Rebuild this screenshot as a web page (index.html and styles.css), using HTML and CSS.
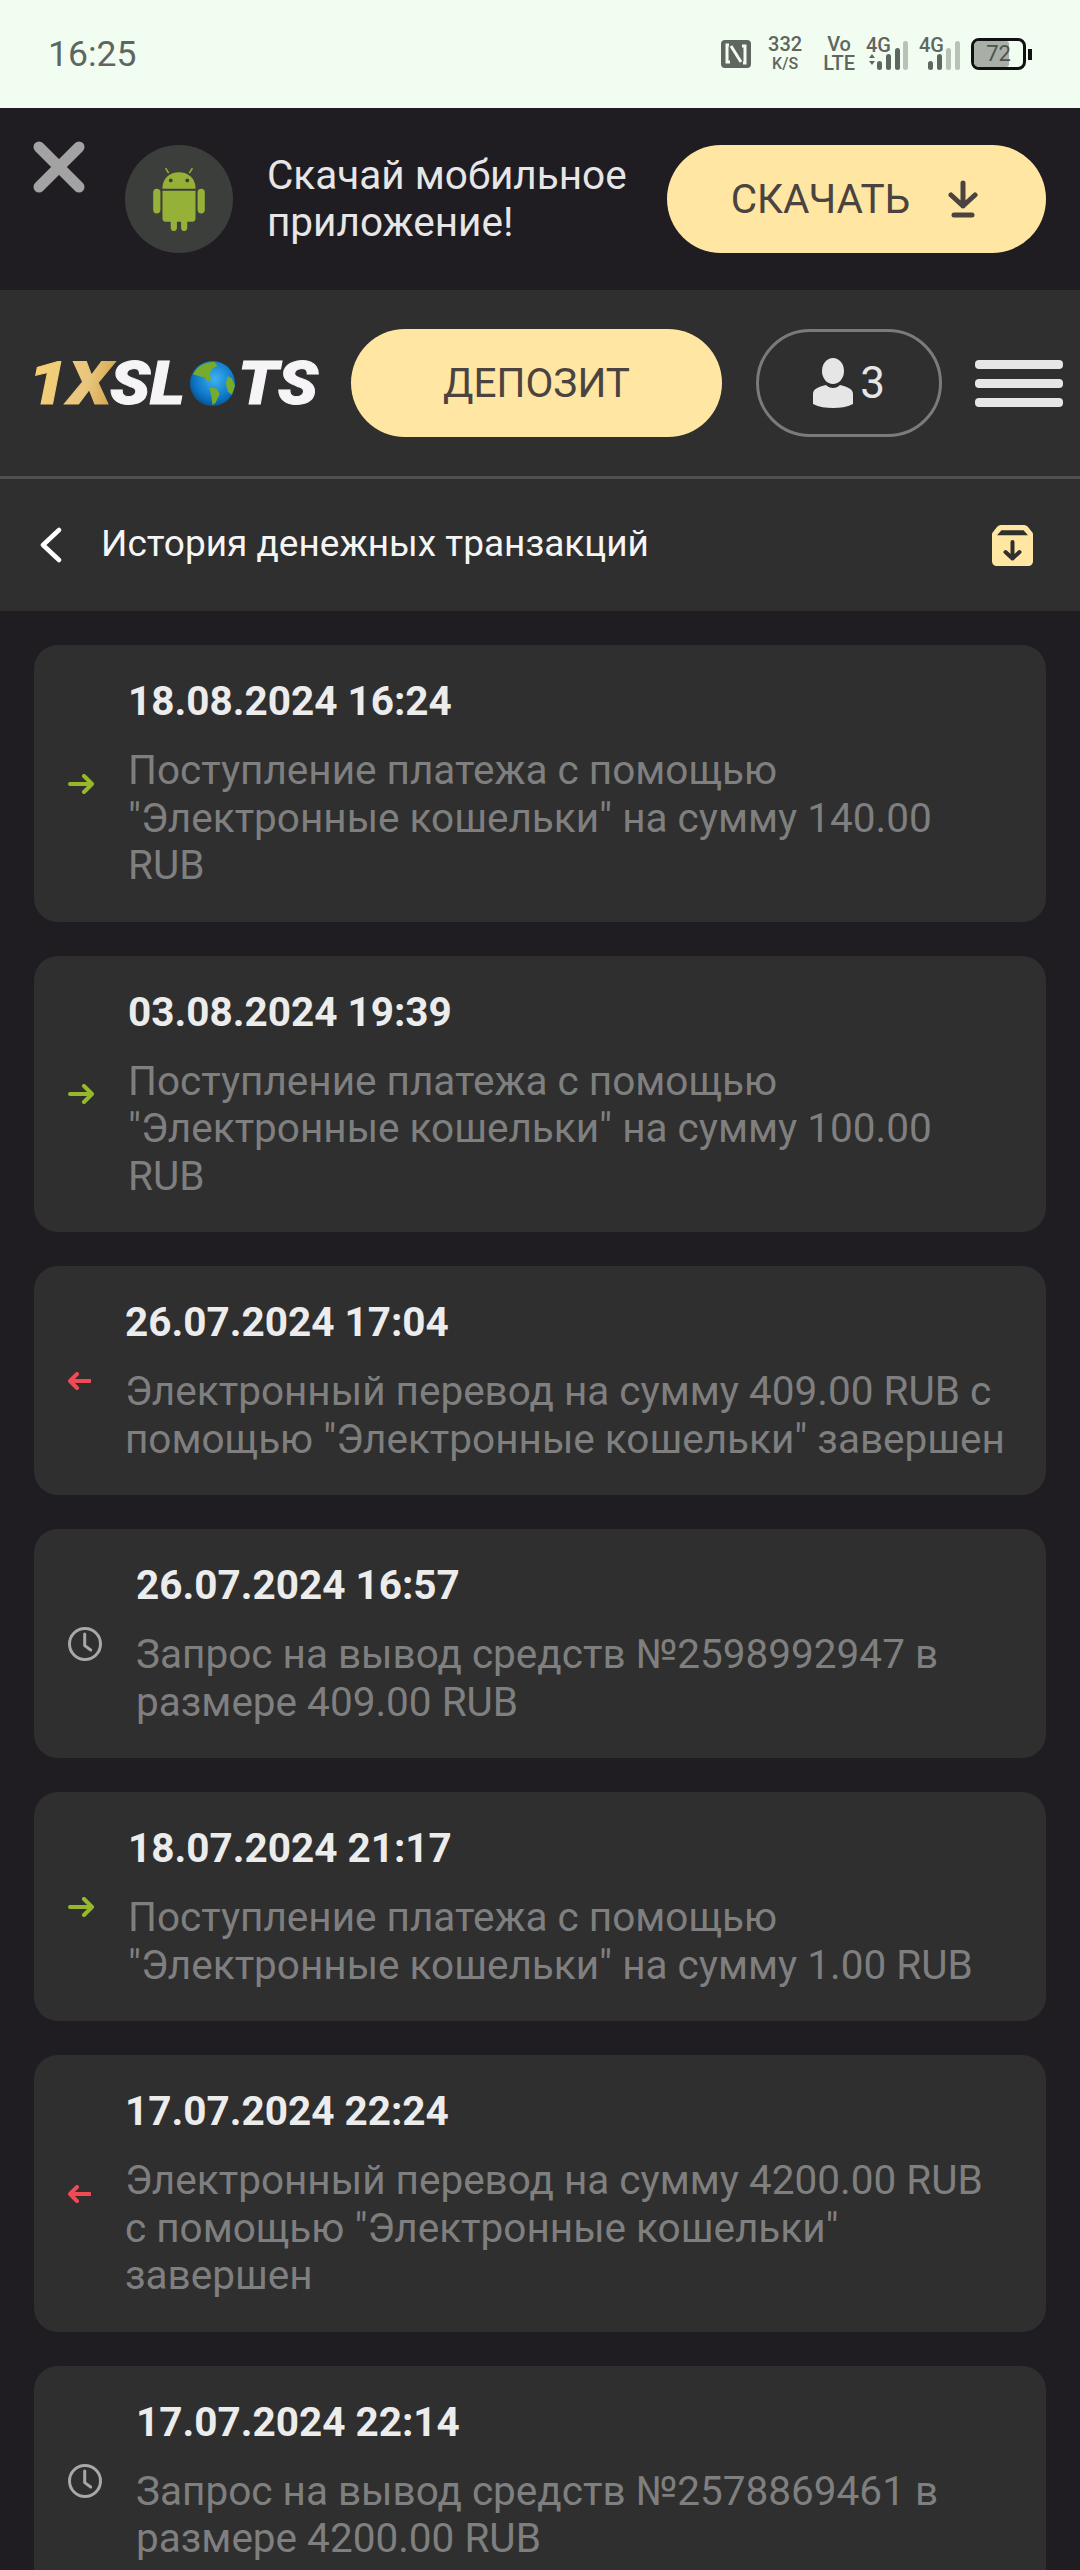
FILE: index.html
```html
<!DOCTYPE html>
<html>
<head>
<meta charset="utf-8">
<link rel="stylesheet" href="styles.css">
</head>
<body>

<div class="status">
  <span class="clock">16:25</span>
  <div class="status-icons">
    <svg width="30" height="28" viewBox="0 0 30 28"><rect width="30" height="28" rx="4" fill="#5f665f"/><path d="M8 5H6v17h3M22 23h2V6h-3M10 6l10 16" stroke="#f1fdf1" stroke-width="3" fill="none"/></svg>
    <div class="speed"><b>332</b><small>K/S</small></div>
    <div class="volte"><b>Vo</b><b>LTE</b></div>
    <div class="sig">
      <span class="g">4G</span>
      <svg width="42" height="30" viewBox="0 0 42 30"><path d="M3 17l3-4 3 4zM3 20l3 4 3-4z" fill="#5f665f"/><rect x="11" y="20" width="5" height="9" rx="2.500" fill="#5f665f"/><rect x="20" y="13" width="5" height="16" rx="2.500" fill="#5f665f"/><rect x="29" y="7" width="5" height="22" rx="2.500" fill="#5f665f"/><rect x="37" y="0" width="5" height="29" rx="2.500" fill="#b8c2b6"/></svg>
    </div>
    <div class="sig">
      <span class="g">4G</span>
      <svg width="34" height="30" viewBox="0 0 34 30"><rect x="1" y="20" width="5" height="9" rx="2.500" fill="#5f665f"/><rect x="10" y="13" width="5" height="16" rx="2.500" fill="#5f665f"/><rect x="19" y="7" width="5" height="22" rx="2.500" fill="#b8c2b6"/><rect x="28" y="0" width="5" height="29" rx="2.500" fill="#b8c2b6"/></svg>
    </div>
    <div class="battery"><div class="battery-fill"></div><span>72</span></div>
    <div class="battery-tip"></div>
  </div>
</div>

<div class="app-banner">
  <svg class="close-x" width="52" height="52" viewBox="0 0 52 52"><path d="M6 6l40 40M46 6L6 46" stroke="#a3a3a3" stroke-width="11" stroke-linecap="round"/></svg>
  <div class="android-circle">
    <svg width="52" height="64" viewBox="0 0 50 62" fill="#96b138"><path d="M9 21h32v-1C41 11 34 5 25 5S9 11 9 20z"/><path d="M9 23h32v27c0 2-1 3-3 3h-5v6c0 4-6 4-6 0v-6h-4v6c0 4-6 4-6 0v-6h-5c-2 0-3-1-3-3z"/><rect x="0" y="21" width="7" height="24" rx="3.500"/><rect x="43" y="21" width="7" height="24" rx="3.500"/><path d="M15 6l-3-5M35 6l3-5" stroke="#96b138" stroke-width="1.500"/><circle cx="17" cy="13" r="1.800" fill="#3b3e3a"/><circle cx="33" cy="13" r="1.800" fill="#3b3e3a"/></svg>
  </div>
  <p class="banner-text">Скачай мобильное приложение!</p>
  <button class="yellow-btn download-btn">СКАЧАТЬ
    <svg width="30" height="38" viewBox="0 0 30 38" fill="none" stroke="#4a4340" stroke-width="5" stroke-linecap="round" stroke-linejoin="round"><path d="M15 3v23M3 15l12 11 12-11M6 35h18"/></svg>
  </button>
</div>

<div class="header">
  <div class="logo">
    <span class="logo-part logo-gold">1X</span>
    <span class="logo-part logo-sl">SL</span>
    <svg class="globe" width="45" height="45" viewBox="0 0 44 44"><defs><radialGradient id="sea" cx="55%" cy="40%" r="65%"><stop offset="0" stop-color="#3fb2f2"/><stop offset="0.7" stop-color="#0b74c4"/><stop offset="1" stop-color="#0b4b86"/></radialGradient></defs><circle cx="22" cy="22" r="22" fill="url(#sea)"/><path d="M3 13C7 5 14 1 24 1l3 4-5 2-3 6 2 5-4 2-3-4-5-1zM19 26l7 1 3 5-4 9-3 2-1-8zM37 15l4 2 3 7-3 9-4-3-2-8z" fill="#77ab2b"/></svg>
    <span class="logo-part logo-ts">TS</span>
  </div>
  <button class="yellow-btn deposit-btn">ДЕПОЗИТ</button>
  <div class="acc-btn">
    <svg width="40" height="50" viewBox="0 0 40 50" fill="#e6e6e6"><ellipse cx="20" cy="13" rx="11" ry="13"/><path d="M0 36c0-5 5-7 13-9 2 2 4 3 7 3s5-1 7-3c8 2 13 4 13 9v10c-6 3-13 4-20 4S6 49 0 46z"/></svg>
    <span>3</span>
  </div>
  <div class="burger"><i></i><i></i><i></i></div>
</div>

<div class="subhead">
  <svg class="back" width="22" height="36" viewBox="0 0 22 36" fill="none" stroke="#fff" stroke-width="4.500" stroke-linecap="round" stroke-linejoin="round"><path d="M19 3L3 18l16 15"/></svg>
  <span class="subhead-title">История денежных транзакций</span>
  <svg class="archive" width="41" height="41" viewBox="0 0 41 41"><path d="M9 0h23c2 0 3 1 4 2l4 5c1 1 1 2 1 3v26c0 3-2 5-5 5H5c-3 0-5-2-5-5V10c0-1 0-2 1-3l4-5c1-1 2-2 4-2z" fill="#ffe6a3"/><path d="M9.500 5.300h22l4.500 5H5z" fill="#2f2f2f"/><path d="M20.500 17v15M13.500 27l7 6.500 7-6.500" stroke="#2f2f2f" stroke-width="4" fill="none" stroke-linecap="round" stroke-linejoin="round"/></svg>
</div>

<div class="list">
  <div class="card"><svg class="ico in" width="26" height="20" viewBox="0 0 26 20"><path d="M2 10h22M16 2l8 8-8 8"/></svg><div class="card-body"><div class="date">18.08.2024 16:24</div><div class="desc">Поступление платежа с помощью "Электронные кошельки" на сумму 140.00 RUB</div></div></div>
  <div class="card"><svg class="ico in" width="26" height="20" viewBox="0 0 26 20"><path d="M2 10h22M16 2l8 8-8 8"/></svg><div class="card-body"><div class="date">03.08.2024 19:39</div><div class="desc">Поступление платежа с помощью "Электронные кошельки" на сумму 100.00 RUB</div></div></div>
  <div class="card"><svg class="ico out" width="23" height="18" viewBox="0 0 23 18"><path d="M22 9H2M9 2L2 9l7 7"/></svg><div class="card-body"><div class="date">26.07.2024 17:04</div><div class="desc">Электронный перевод на сумму 409.00 RUB с помощью "Электронные кошельки" завершен</div></div></div>
  <div class="card"><svg class="ico clock-ico" width="34" height="34" viewBox="0 0 34 34"><circle cx="17" cy="17" r="15.500"/><path d="M16.700 7v11.600l6 4.400"/></svg><div class="card-body"><div class="date">26.07.2024 16:57</div><div class="desc">Запрос на вывод средств №2598992947 в размере 409.00 RUB</div></div></div>
  <div class="card"><svg class="ico in" width="26" height="20" viewBox="0 0 26 20"><path d="M2 10h22M16 2l8 8-8 8"/></svg><div class="card-body"><div class="date">18.07.2024 21:17</div><div class="desc">Поступление платежа с помощью "Электронные кошельки" на сумму 1.00 RUB</div></div></div>
  <div class="card"><svg class="ico out" width="23" height="18" viewBox="0 0 23 18"><path d="M22 9H2M9 2L2 9l7 7"/></svg><div class="card-body"><div class="date">17.07.2024 22:24</div><div class="desc">Электронный перевод на сумму 4200.00 RUB с помощью "Электронные кошельки" завершен</div></div></div>
  <div class="card"><svg class="ico clock-ico" width="34" height="34" viewBox="0 0 34 34"><circle cx="17" cy="17" r="15.500"/><path d="M16.700 7v11.600l6 4.400"/></svg><div class="card-body"><div class="date">17.07.2024 22:14</div><div class="desc">Запрос на вывод средств №2578869461 в размере 4200.00 RUB</div></div></div>
</div>

</body>
</html>
```

FILE: styles.css
```css
* {
  box-sizing: border-box;
}

html, body {
  margin: 0;
  height: 2570px;
  overflow: hidden;
}

body {
  font-family: Roboto, "Liberation Sans", sans-serif;
  background-color: #201d22;
}

.status {
  height: 108px;
  background-color: #f1fdf1;
  display: flex;
  align-items: center;
  justify-content: space-between;
  padding: 0 48px 0 48px;
  color: #5f665f;
}

.clock {
  font-size: 35.500px;
}

.status-icons {
  display: flex;
  align-items: center;
}

.speed, .volte {
  display: flex;
  flex-direction: column;
  align-items: center;
  line-height: 19px;
  font-size: 20px;
  margin-left: 17px;
}

.speed small {
  font-size: 16px;
  font-weight: 500;
}

.speed b, .volte b {
  font-weight: 500;
}

.volte {
  margin-left: 21px;
}

.sig {
  position: relative;
  margin-left: 11px;
  width: 42px;
  height: 34px;
}

.sig svg {
  position: absolute;
  right: 0;
  bottom: 0;
}

.g {
  position: absolute;
  left: 0;
  top: -4px;
  font-size: 20px;
  font-weight: 500;
}

.battery {
  position: relative;
  width: 55px;
  height: 32px;
  border: 3px solid #111;
  border-radius: 8px;
  margin-left: 10px;
  overflow: hidden;
}

.battery-fill {
  height: 100%;
  width: 72%;
  background-color: #a8afa6;
  border-radius: 3px;
}

.battery span {
  position: absolute;
  left: 0;
  right: 0;
  top: 0;
  text-align: center;
  font-size: 22px;
  line-height: 26px;
  color: #4d534d;
}

.battery-tip {
  width: 4px;
  height: 11px;
  background-color: #111;
  margin-left: 2px;
}

.app-banner {
  height: 182px;
  display: flex;
  align-items: center;
  padding: 0 34px 0 33px;
  position: relative;
}

.close-x {
  position: absolute;
  left: 33px;
  top: 33px;
}

.android-circle {
  width: 108px;
  height: 108px;
  border-radius: 50%;
  background-color: #3b3e3a;
  margin-left: 92px;
  display: flex;
  align-items: center;
  justify-content: center;
  flex: none;
}

.banner-text {
  margin: 0 0 0 34px;
  width: 380px;
  font-size: 40.500px;
  line-height: 47px;
  color: #e6e6e6;
}

.yellow-btn {
  background-color: #ffe6a3;
  color: #4a4340;
  border: none;
  border-radius: 54px;
  height: 108px;
  font-family: inherit;
  font-size: 40.500px;
  display: flex;
  align-items: center;
  justify-content: center;
  flex: none;
}

.download-btn {
  width: 379px;
  margin-left: auto;
  padding-right: 10px;
  gap: 38px;
}

.header {
  height: 189px;
  background-color: #2f2f2f;
  border-bottom: 3px solid #505050;
  display: flex;
  align-items: center;
  padding: 0 17px 0 34px;
}

.logo {
  width: 316px;
  height: 45px;
  flex: none;
  display: flex;
  align-items: center;
}

/* letters of the logo are wider than Roboto Black, so they get stretched */
.logo-part {
  display: block;
  flex: none;
  font-size: 60px;
  line-height: 45px;
  font-weight: 900;
  font-style: italic;
  -webkit-text-stroke: 1px currentColor;
  transform: scaleX(1.1);
  transform-origin: left center;
}

.logo-gold {
  width: 82px;
  margin-left: -6px;
  background: linear-gradient(100deg, #f8d272, #e9c680 60%, #c9962e);
  -webkit-background-clip: text;
  background-clip: text;
  color: transparent;
  padding-right: 6px;
  transform: scaleX(1.18);
}

.logo-sl {
  width: 80px;
  color: #f7f4f8;
}

.logo-ts {
  color: #f7f4f8;
  margin-left: 3px;
}

.globe {
  flex: none;
}

.deposit-btn {
  width: 371px;
  margin-left: 1px;
}

.acc-btn {
  width: 186px;
  height: 108px;
  border: 3px solid #7b7b7b;
  border-radius: 54px;
  margin-left: 34px;
  display: flex;
  align-items: center;
  justify-content: center;
  gap: 7px;
  color: #e6e6e6;
  font-size: 44px;
}

.burger {
  width: 88px;
  margin-left: auto;
  display: flex;
  flex-direction: column;
  gap: 10px;
}

.burger i {
  display: block;
  height: 9px;
  border-radius: 4px;
  background-color: #e6e6e6;
}

.subhead {
  height: 132px;
  background-color: #2f2f2f;
  display: flex;
  align-items: center;
  padding: 0 47px 0 40px;
  color: #fff;
}

.subhead-title {
  margin: 0 0 3px 39px;
  font-size: 37px;
  color: #f5f5f5;
}

.archive {
  margin-left: auto;
}

.list {
  padding: 34px 34px 0;
  display: flex;
  flex-direction: column;
  gap: 34px;
}

.card {
  background-color: #2f2f2f;
  border-radius: 24px;
  padding: 33px 40px 32px 34px;
  display: flex;
  align-items: center;
  gap: 34px;
}

.ico {
  flex: none;
  fill: none;
  stroke-width: 4;
  stroke-linecap: round;
  stroke-linejoin: round;
}

.in {
  stroke: #96b92c;
}

.out {
  stroke: #f04a56;
}

.clock-ico {
  stroke: #a8a8a8;
  stroke-width: 3;
}

.card-body {
  min-width: 0;
}

.date {
  font-size: 40.500px;
  line-height: 47px;
  font-weight: 700;
  color: #ececec;
  margin-bottom: 22px;
}

.desc {
  font-size: 40.500px;
  line-height: 47.500px;
  color: #7f7f7f;
}
```
